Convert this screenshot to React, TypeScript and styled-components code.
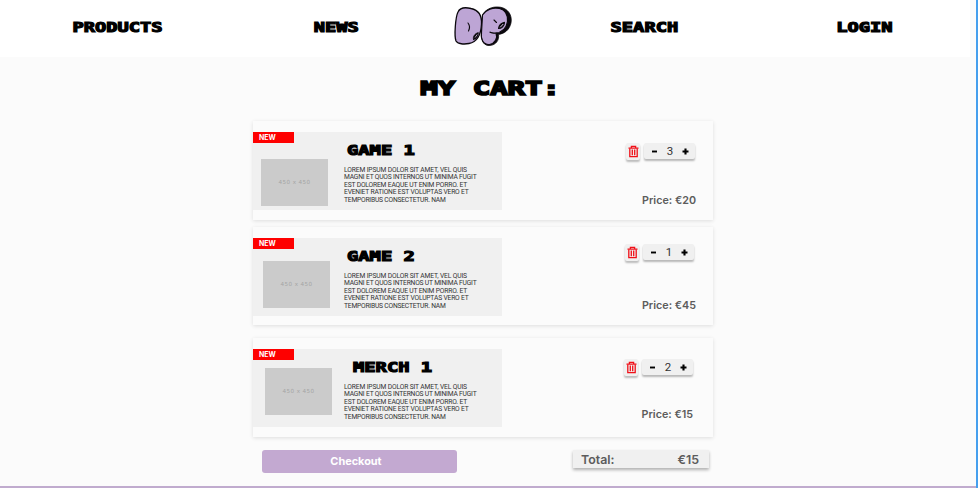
import React from "react";
import styled, { createGlobalStyle } from "styled-components";

const GlobalStyle = createGlobalStyle`
  * { box-sizing: border-box; }
  body { margin: 0; background: #fbfbfb; font-family: Roboto, Inter, sans-serif; }
`;

const Page = styled.div`
  width: 978px;
  height: 488px;
  overflow: hidden;
  background: #fbfbfb;
  border-right: 2px solid #46a0ee;
  display: flex;
  flex-direction: column;
`;

const Header = styled.header`
  height: 57px;
  width: 970px;
  flex: none;
  background: #fff;
  display: grid;
  grid-template-columns: 235px 202px 92px 230px 210px;
  justify-items: center;
`;

const Display = styled.span<{ $size: number; $stretch: number }>`
  display: inline-block;
  font-family: "DejaVu Sans Mono", monospace;
  font-weight: 700;
  font-size: ${(p) => p.$size}px;
  line-height: 1;
  color: #000;
  white-space: pre;
  -webkit-text-stroke: ${(p) => p.$size * 0.085}px #000;
  transform: scaleX(${(p) => p.$stretch});
`;

const NavLink = styled.a`
  padding-top: 20.5px;
  height: 57px;
  line-height: 0;
`;

const Logo = styled.svg`
  width: 60px;
  height: 42px;
  margin-top: 5px;
`;

const Title = styled.h1`
  margin: 0;
  height: 64px;
  padding: 21px 0 0 5px;
  width: 976px;
  text-align: center;
  line-height: 0;
`;

const Cart = styled.main`
  width: 460px;
  margin-left: 253px;
  display: flex;
  flex-direction: column;
`;

const Card = styled.article<{ $gap: number; $top: number; $h: number }>`
  height: ${(p) => p.$h}px;
  margin-bottom: ${(p) => p.$gap}px;
  padding-top: ${(p) => p.$top}px;
  display: flex;
  background: #fbfbfb;
  box-shadow: 0 1px 4px rgba(0, 0, 0, 0.12);
`;

const Panel = styled.section`
  width: 249px;
  height: 78px;
  flex: none;
  background: #f0f0f0;
  display: grid;
  grid-template-columns: 91px 1fr;
`;

const Media = styled.div`
  display: flex;
  flex-direction: column;
`;

const Badge = styled.span`
  width: 41px;
  height: 11px;
  padding-left: 6px;
  background: #fe0000;
  color: #fff;
  font: 700 7px/11px Inter, sans-serif;
`;

const Placeholder = styled.div<{ $left: number; $gap: number }>`
  margin: ${(p) => p.$gap}px 0 0 ${(p) => p.$left}px;
  width: 67px;
  height: 47px;
  background: #cbcbcb;
  color: #a5a5a5;
  display: grid;
  place-items: center;
  font: 400 5.6px/1 "DejaVu Sans", sans-serif;
  letter-spacing: 0.4px;
  padding-top: 1px;
`;

const Copy = styled.div`
  padding-top: 12px;
`;

const Name = styled.h2<{ $left: number }>`
  margin: 0;
  height: 22.5px;
  padding-left: ${(p) => p.$left}px;
  line-height: 0;
  span { transform-origin: left center; }
`;

const Line = styled.span<{ $spacing: number }>`
  display: block;
  height: 7.65px;
  font: 400 6.7px/7.65px Roboto, sans-serif;
  letter-spacing: ${(p) => p.$spacing}px;
  white-space: nowrap;
  color: #333;
`;

const Side = styled.section<{ $top: number; $right: number }>`
  flex: 1;
  display: flex;
  flex-direction: column;
  align-items: flex-end;
  padding-right: ${(p) => p.$right}px;
  margin-top: ${(p) => p.$top}px;
`;

const Controls = styled.div`
  display: flex;
  gap: 4px;
  height: 17px;
`;

const TrashButton = styled.button`
  width: 14px;
  height: 17px;
  padding: 0;
  border: 0;
  border-radius: 2px;
  background: #f0f0f0;
  box-shadow: 0 2px 2px rgba(0, 0, 0, 0.25);
  display: grid;
  place-items: center;
`;

const Stepper = styled.div`
  width: 51px;
  height: 16px;
  border-radius: 2px;
  background: #f0f0f0;
  box-shadow: 0 2px 2px rgba(0, 0, 0, 0.27);
  display: grid;
  grid-template-columns: 21px 10px 20px;
  place-items: center;
  font: 400 11.5px/16px Roboto, sans-serif;
  color: #333;
`;

const Price = styled.p<{ $gap: number; $shift: number }>`
  margin: ${(p) => p.$gap}px ${(p) => p.$shift}px 0 0;
  font: 600 10.75px/14px Inter, sans-serif;
  white-space: nowrap;
  color: #5c5c5c;
`;

const Footer = styled.div`
  display: flex;
  justify-content: space-between;
  margin: 0 4px 0 9px;
  align-items: flex-start;
`;

const Checkout = styled.button`
  width: 195px;
  height: 23px;
  margin-top: 1px;
  padding: 0 7px 0 0;
  border: 0;
  border-radius: 3px;
  background: #c3a9d1;
  color: #fff;
  font: 700 10.9px/23px Inter, sans-serif;
`;

const Total = styled.div`
  width: 136px;
  height: 18px;
  margin-top: 1px;
  padding: 0 10px 0 8px;
  display: flex;
  justify-content: space-between;
  background: #f0f0f0;
  box-shadow: 0 2px 3px rgba(0, 0, 0, 0.3);
  color: #5c5c5c;
  font: 600 12.4px/19px Inter, sans-serif;
`;

const Baseline = styled.div`
  height: 2px;
  flex: none;
  margin-top: auto;
  background: #c0abce;
`;

const description: [string, number][] = [
  ["LOREM IPSUM DOLOR SIT AMET, VEL QUIS", -0.13],
  ["MAGNI ET QUOS INTERNOS UT MINIMA FUGIT", -0.18],
  ["EST DOLOREM EAQUE UT ENIM PORRO. ET", -0.16],
  ["EVENIET RATIONE EST VOLUPTAS VERO ET", -0.17],
  ["TEMPORIBUS CONSECTETUR. NAM", -0.2],
];

const items = [
  { name: "GAME 1", qty: 3, price: 20, h: 99, gap: 7, top: 11, nameLeft: 3, imgLeft: 8, imgGap: 16, sideTop: 11, right: 18, priceGap: 34, shift: -1 },
  { name: "GAME 2", qty: 1, price: 45, h: 98, gap: 13, top: 11, nameLeft: 3, imgLeft: 10, imgGap: 12, sideTop: 6, right: 19, priceGap: 38, shift: -2 },
  { name: "MERCH 1", qty: 2, price: 15, h: 99, gap: 12, top: 11, nameLeft: 9, imgLeft: 12, imgGap: 8, sideTop: 10, right: 20, priceGap: 32, shift: 0 },
];

const TrashIcon = () => (
  <svg width="11" height="13" viewBox="0 0 11 13" fill="none" stroke="#f01018">
    <path d="M.5 3.1h10M3.400 3V1.300h4.200V3" strokeWidth="1.3" />
    <path d="M1.800 3.500v8.200h7.400V3.500M4.300 4.500v5.800M6.700 4.500v5.800" strokeWidth="1.3" />
  </svg>
);

const MinusIcon = () => (
  <svg width="7" height="7" viewBox="0 0 7 7"><path d="M1 3.5h5" stroke="#000" strokeWidth="1.9" /></svg>
);

const PlusIcon = () => (
  <svg width="7" height="7" viewBox="0 0 7 7"><path d="M.5 3.5h6M3.5.5v6" stroke="#000" strokeWidth="2.1" /></svg>
);

const LogoMark = () => (
  <Logo viewBox="453 5 60 42" stroke="#0b080d" strokeLinejoin="round" strokeLinecap="round">
    <path d="M483 14C487 8 494 6 501 7.300C508 9 512.500 15 511 23C509.500 30 504.500 33.500 498.500 34.500C499.500 40 496 45 490 45.500C484 46 481 41 482 35Z" fill="#0b080d" strokeWidth=".7" />
    <path d="M458 12C460 7.500 465 7 471 8.500C478 10 482 15 481.500 24C481 34 477 42 469 43.500C464 44.500 457.500 44 456 41C454 36 455.500 17 458 12Z" fill="#bda5d5" strokeWidth="1.3" />
    <path d="M482.500 15C486 9.500 493 7 499.500 8.500C505 10 508 14.500 507.500 21.500C506.500 28 503 32.500 495 33C493 33.300 491.500 32.800 490 32.200C493 33.500 495 33.200 496 33C498 38 495 43.500 489.500 44.500C483 45 480.500 39 481.500 32Z" fill="#bda5d5" strokeWidth="1.2" />
    <path d="M468 23C470 25.500 470 28 468.500 31M494 20L496.500 22.500" fill="none" strokeWidth="1.1" />
    <path d="M473.500 39.500C472.500 36.500 475 33.500 478.300 32.500C478.500 36 476.500 39.500 473.500 39.500Z" fill="#0b080d" strokeWidth=".7" />
    <path d="M475.300 37.200L477 34.800" stroke="#d9c9e7" strokeWidth=".8" />
    <path d="M498.500 28.500C499 25 501.500 23 504.500 22.300C504.500 26 501.500 28.500 498.500 28.500Z" fill="#0b080d" strokeWidth="1.1" />
    <path d="M500.500 27L503 24.300" stroke="#d9c9e7" strokeWidth="1" />
  </Logo>
);

const NavItem = ({ label }: { label: string }) => (
  <NavLink><Display $size={13.5} $stretch={1.385}>{label}</Display></NavLink>
);

export default function App() {
  return (
    <>
      <GlobalStyle />
      <Page>
        <Header>
          <NavItem label="PRODUCTS" />
          <NavItem label="NEWS" />
          <LogoMark />
          <NavItem label="SEARCH" />
          <NavItem label="LOGIN" />
        </Header>
        <Title><Display $size={20} $stretch={1.45}>MY CART:</Display></Title>
        <Cart>
          {items.map((item) => (
            <Card key={item.name} $gap={item.gap} $top={item.top} $h={item.h}>
              <Panel>
                <Media>
                  <Badge>NEW</Badge>
                  <Placeholder $left={item.imgLeft} $gap={item.imgGap}>450 x 450</Placeholder>
                </Media>
                <Copy>
                  <Name $left={item.nameLeft}><Display $size={13.5} $stretch={1.39}>{item.name}</Display></Name>
                  {description.map(([text, spacing]) => <Line key={text} $spacing={spacing}>{text}</Line>)}
                </Copy>
              </Panel>
              <Side $top={item.sideTop} $right={item.right}>
                <Controls>
                  <TrashButton aria-label="Remove"><TrashIcon /></TrashButton>
                  <Stepper><MinusIcon /><span>{item.qty}</span><PlusIcon /></Stepper>
                </Controls>
                <Price $gap={item.priceGap} $shift={item.shift}>Price: €{item.price}</Price>
              </Side>
            </Card>
          ))}
          <Footer>
            <Checkout>Checkout</Checkout>
            <Total><span>Total:</span><span>€15</span></Total>
          </Footer>
        </Cart>
        <Baseline />
      </Page>
    </>
  );
}
